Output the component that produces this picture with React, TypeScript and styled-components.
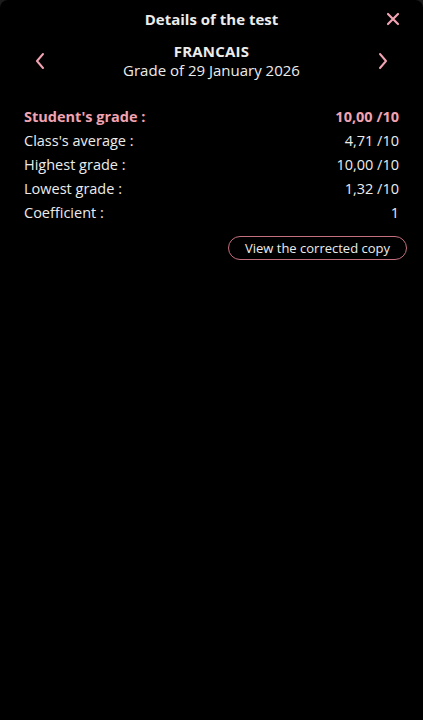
import React from 'react';
import styled, { createGlobalStyle } from 'styled-components';

const GlobalStyle = createGlobalStyle`
  html, body {
    margin: 0;
    padding: 0;
    background: #1c1c1c;
  }
  body {
    font-family: "Open Sans", "Liberation Sans", sans-serif;
    color: #ececec;
  }
`;

const colors = {
    pink: '#f1a3b1',
    pinkBorder: '#c4707f',
    text: '#ececec',
    sheet: '#000000',
};

const Sheet = styled.div`
  height: 720px;
  background: ${colors.sheet};
  border-radius: 8px 8px 0 0;
  overflow: hidden;
`;

const Header = styled.div`
  display: grid;
  grid-template-columns: 40px 1fr 40px;
  align-items: center;
  padding: 8px 10px 0 10px;
  height: 22px;
`;

const Title = styled.div`
  grid-column: 2;
  text-align: center;
  font-size: 15px;
  font-weight: 700;
  color: ${colors.text};
`;

const IconButton = styled.button`
  background: none;
  border: none;
  padding: 0;
  display: flex;
  align-items: center;
  justify-content: center;
  color: ${colors.pink};
  cursor: pointer;
`;

const Nav = styled.div`
  display: grid;
  grid-template-columns: 80px 1fr 80px;
  align-items: center;
  margin-top: 12px;
`;

const NavCenter = styled.div`
  text-align: center;
  line-height: 19px;
`;

const Subject = styled.div`
  font-size: 15px;
  font-weight: 700;
  letter-spacing: 0.2px;
`;

const SubTitle = styled.div`
  font-size: 15px;
`;

const Rows = styled.div`
  display: flex;
  flex-direction: column;
  padding: 25px 24px 0 24px;
`;

const Row = styled.div<{ highlight?: boolean }>`
  display: flex;
  justify-content: space-between;
  height: 24px;
  line-height: 24px;
  font-size: 14.5px;
  font-weight: ${(p) => (p.highlight ? 700 : 400)};
  color: ${(p) => (p.highlight ? colors.pink : colors.text)};
`;

const Actions = styled.div`
  display: flex;
  justify-content: flex-end;
  padding: 11px 16px 0 0;
`;

const CopyButton = styled.button`
  width: 179px;
  height: 24px;
  border: 1.5px solid ${colors.pinkBorder};
  border-radius: 12px;
  background: transparent;
  color: ${colors.text};
  font-family: "Open Sans", "Liberation Sans", sans-serif;
  font-size: 13px;
  padding: 0;
  cursor: pointer;
`;

const Close = () => (
    <svg width="14" height="14" viewBox="0 0 14 14">
        <path d="M2 2 L12 12 M12 2 L2 12" stroke="currentColor" strokeWidth="2.2" strokeLinecap="round" />
    </svg>
);

const Chevron = ({ dir }: { dir: 'left' | 'right' }) => (
    <svg width="12" height="18" viewBox="0 0 12 18">
        <path
            d={dir === 'left' ? 'M9 2 L3 9 L9 16' : 'M3 2 L9 9 L3 16'}
            fill="none"
            stroke="currentColor"
            strokeWidth="2"
            strokeLinecap="round"
            strokeLinejoin="round"
        />
    </svg>
);

const rows = [
    { label: "Student's grade :", value: '10,00 /10', highlight: true },
    { label: "Class's average :", value: '4,71 /10' },
    { label: 'Highest grade :', value: '10,00 /10' },
    { label: 'Lowest grade :', value: '1,32 /10' },
    { label: 'Coefficient :', value: '1' },
];

export default function App() {
    return (
        <>
            <GlobalStyle />
            <Sheet>
                <Header>
                    <Title>Details of the test</Title>
                    <IconButton aria-label="close">
                        <Close />
                    </IconButton>
                </Header>
                <Nav>
                    <IconButton aria-label="previous">
                        <Chevron dir="left" />
                    </IconButton>
                    <NavCenter>
                        <Subject>FRANCAIS</Subject>
                        <SubTitle>Grade of 29 January 2026</SubTitle>
                    </NavCenter>
                    <IconButton aria-label="next">
                        <Chevron dir="right" />
                    </IconButton>
                </Nav>
                <Rows>
                    {rows.map((r) => (
                        <Row key={r.label} highlight={r.highlight}>
                            <span>{r.label}</span>
                            <span>{r.value}</span>
                        </Row>
                    ))}
                </Rows>
                <Actions>
                    <CopyButton>View the corrected copy</CopyButton>
                </Actions>
            </Sheet>
        </>
    );
}
